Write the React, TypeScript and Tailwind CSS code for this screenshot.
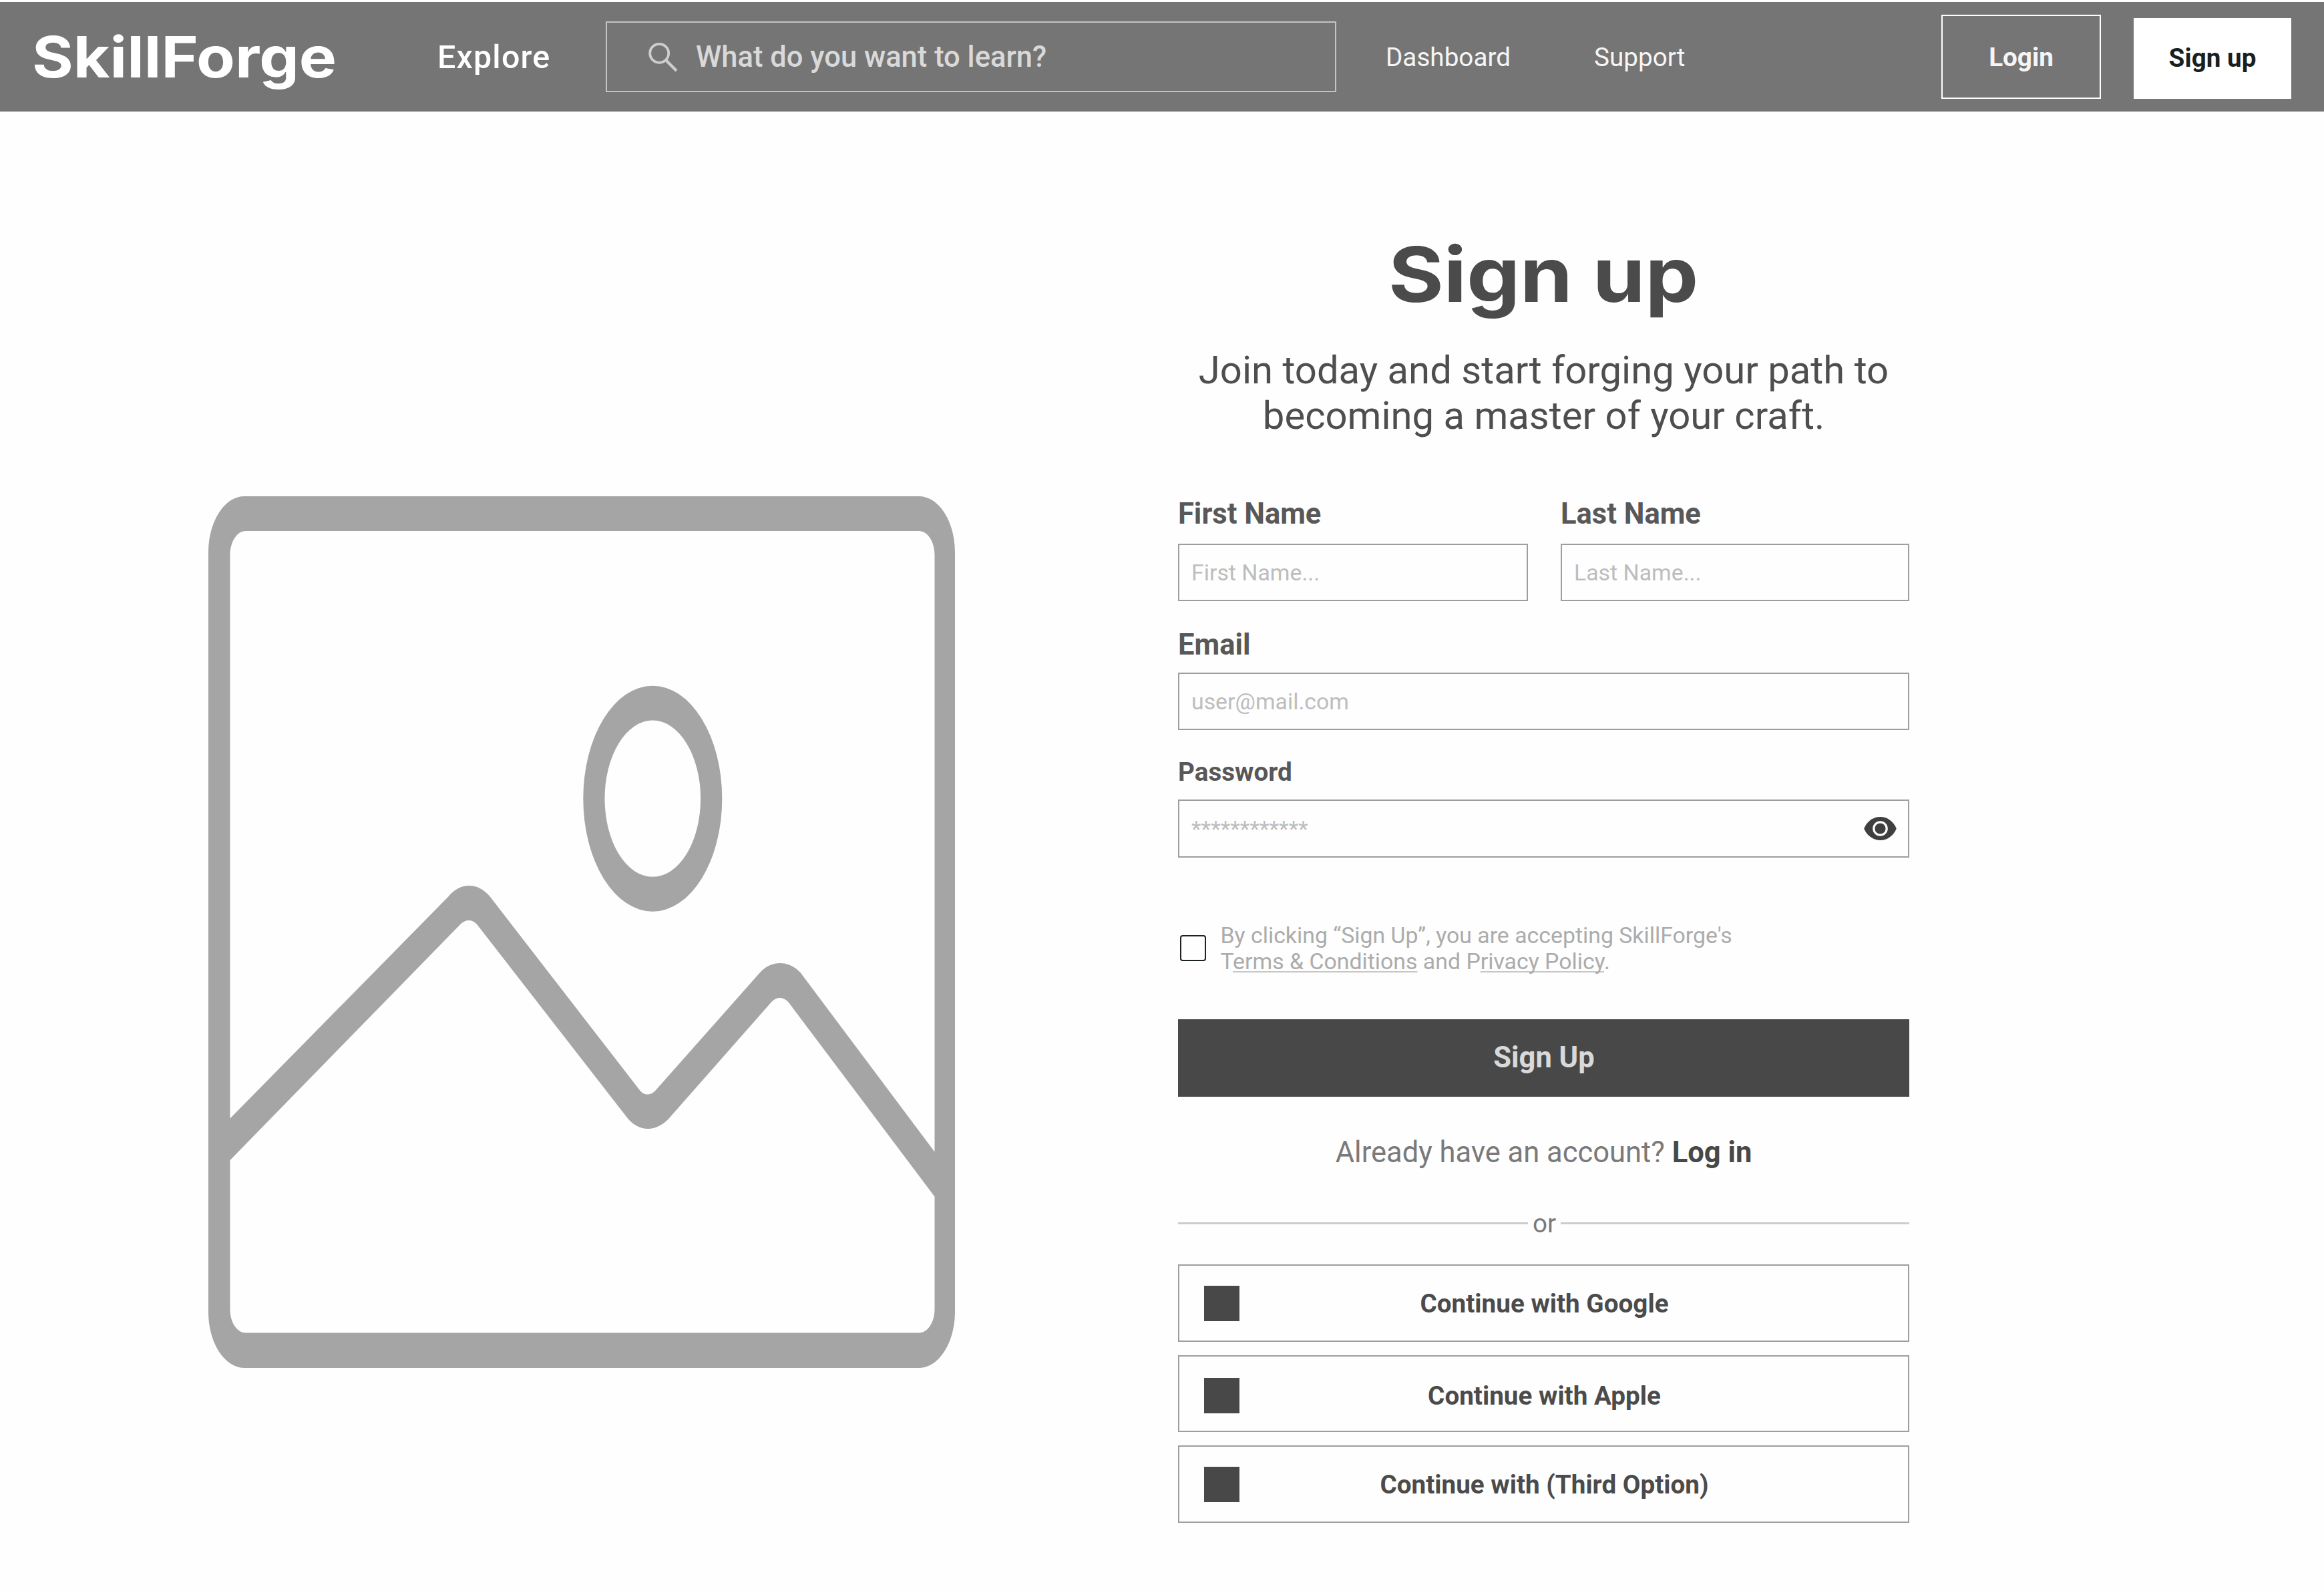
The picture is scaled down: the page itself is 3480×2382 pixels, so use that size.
import React from "react";

function SearchIcon() {
  return (
    <svg className="mt-[1px] h-[44px] w-[44px] shrink-0" viewBox="0 0 44 44" fill="none" stroke="#cdcdcd">
      <circle cx="16.2" cy="15.8" r="14" strokeWidth="3.8" />
      <path d="M26.5 26.5L42 42" strokeWidth="4.4" />
    </svg>
  );
}

function EyeIcon() {
  return (
    <svg className="mb-[2px] h-[35px] w-[49px] shrink-0" viewBox="0 0 49 35">
      <path d="M24.5 0C13.6 0 4.2 7.2 .3 17.5C4.2 27.8 13.6 35 24.5 35S44.8 27.8 48.7 17.5C44.8 7.2 35.4 0 24.5 0Z" fill="#3f3f3f" />
      <circle cx="24.5" cy="17.5" r="9.7" fill="none" stroke="#fff" strokeWidth="3.2" />
    </svg>
  );
}

function PlaceholderImage() {
  return (
    <svg className="mt-[576px] ml-[312px] h-[1305px] w-[1118px] shrink-0" viewBox="312 743 1118 1305" fill="#a5a5a5">
      <path
        fillRule="evenodd"
        d="M366 743H1376C1406 743 1430 781 1430 827V1964C1430 2010 1406 2048 1376 2048H366C336 2048 312 2010 312 1964V827C312 781 336 743 366 743Z
           M368 795C355 795 344.5 811 344.5 831V1674.5L671 1342.8C689 1320.5 716 1320.5 734 1342.8L957 1631C964 1641 975 1641 983 1631L1139 1455C1156 1437.5 1181 1437.5 1198.5 1456L1399.5 1724.5V831C1399.5 811 1389 795 1376 795Z
           M344.5 1737V1960C344.5 1980 355 1995.5 368 1995.5H1376C1389 1995.5 1399.5 1980 1399.5 1960V1791.5L1180.7 1500.6C1173.5 1492 1163 1492 1155.6 1499.7L1001.7 1674.5C983 1695 957 1695 940 1674.5L714 1383.8C707 1376 697 1376 689.5 1383.8Z"
      />
      <path
        fillRule="evenodd"
        d="M873.3 1195.7A104 169 0 1 1 1081.3 1195.7A104 169 0 1 1 873.3 1195.7Z
           M905.5 1195.7A71.8 117 0 1 0 1049.1 1195.7A71.8 117 0 1 0 905.5 1195.7Z"
      />
    </svg>
  );
}

function Header() {
  return (
    <header className="flex h-[164px] items-center bg-[#757575] pr-[49px] pl-[48px] text-[38.67px] text-[#f5f5f5]">
      <div className="w-[607px] pt-[2px]">
        <span className="inline-block origin-left scale-x-[1.111] font-['Inter'] text-[85px] leading-[100px] font-bold text-white">
          SkillForge
        </span>
      </div>
      <a className="w-[252px] pt-[1px] text-[48.33px] leading-[58px] font-medium tracking-[1.2px] text-white">Explore</a>
      <div className="flex h-[106px] w-[1094px] items-center border-2 border-[#c4c4c4] pl-[62px]">
        <SearchIcon />
        <span className="ml-[27px] pt-[2px] text-[43.5px] leading-[52px] font-medium text-[#d9d9d9]">What do you want to learn?</span>
      </div>
      <a className="ml-[74px] w-[312px] pt-[2px] leading-[46px]">Dashboard</a>
      <a className="pt-[2px] leading-[46px]">Support</a>
      <button className="ml-auto flex h-[126px] w-[239px] items-center justify-center border-[2.4px] border-white pt-[2px] leading-[46px] font-bold">
        Login
      </button>
      <button className="mt-[5px] ml-[49px] flex h-[121px] w-[236px] items-center justify-center bg-white pb-[2px] leading-[46px] font-bold text-[#1a1f1f]">
        Sign up
      </button>
    </header>
  );
}

const field = "flex items-center border-2 border-[#9e9e9e] pl-[18px] pr-[17px] pt-[2px] text-[33.83px] leading-[40px] text-[#bdbdbd]";
const label = "text-[43.5px] leading-[52px] font-bold text-[#585858]";

function Social({ text, shift, iconShift }: { text: string; shift: string; iconShift: string }) {
  return (
    <button className="grid h-[115.6px] grid-cols-[53px_1fr_53px] items-center border-2 border-[#9e9e9e] px-[37px] text-[38.67px] leading-[46px] font-bold text-[#4b4b4b]">
      <span className={`h-[53px] w-[53px] bg-[#484848] ${iconShift}`} />
      <span className={`pl-[2px] text-center ${shift}`}>{text}</span>
    </button>
  );
}

export default function App() {
  return (
    <div className="h-[2382px] w-[3480px] overflow-hidden bg-[#fefefe] pt-[3px] font-['Roboto',sans-serif]">
      <Header />
      <main className="flex items-start">
        <PlaceholderImage />
        <section className="ml-[334px] flex w-[1095px] flex-col pt-[183.6px]">
          <h1 className="text-center font-['Inter'] text-[114px] leading-[120px]">
            <span className="inline-block scale-x-[1.11] font-bold text-[#4b4b4b]">Sign up</span>
          </h1>
          <p className="mt-[50.6px] text-center text-[58px] leading-[67.7px] text-[#4e4e4e]">
            Join today and start forging your path to
            <br />
            becoming a master of your craft.
          </p>

          <div className="mt-[87.6px] grid grid-cols-[524px_522px] gap-x-[49px]">
            <div className="flex flex-col">
              <label className={label}>First Name</label>
              <div className={`mt-[17.4px] h-[86px] ${field}`}>First Name...</div>
            </div>
            <div className="flex flex-col">
              <label className={label}>Last Name</label>
              <div className={`mt-[17.4px] h-[86px] ${field}`}>Last Name...</div>
            </div>
          </div>

          <label className={`mt-[40.6px] ${label}`}>Email</label>
          <div className={`mt-[14.4px] h-[86.6px] ${field}`}>user@mail.com</div>

          <label className="mt-[39.5px] text-[38.67px] leading-[46px] font-bold text-[#585858]">Password</label>
          <div className={`mt-[18.5px] h-[87px] justify-between ${field}`}>
            <span>************</span>
            <EyeIcon />
          </div>

          <div className="mt-[98px] flex items-start pl-[3px]">
            <span className="mt-[18px] h-[38.5px] w-[38.5px] shrink-0 rounded-[4px] border-[2.4px] border-[#1c2222]" />
            <p className="ml-[22px] text-[33.83px] leading-[38.7px] text-[#acacac]">
              By clicking “Sign Up”, you are accepting SkillForge's
              <br />T
              <span className="underline decoration-[#c8c8c8] decoration-2 underline-offset-[3px] [text-decoration-skip-ink:none]">erms &amp; Conditions</span> and P
              <span className="underline decoration-[#c8c8c8] decoration-2 underline-offset-[3px] [text-decoration-skip-ink:none]">rivacy Policy</span>.
            </p>
          </div>

          <button className="mt-[66.2px] h-[116px] bg-[#484848] pt-[1px] pl-[1px] text-[43.5px] leading-[52px] font-bold text-[#d9d9d9]">
            Sign Up
          </button>

          <p className="mt-[58.5px] text-center text-[43.5px] leading-[52px] text-[#7a7a7a]">
            Already have an account? <b className="font-bold text-[#484848]">Log in</b>
          </p>

          <div className="mt-[56.5px] flex items-center text-[38.67px] leading-[46px] text-[#7a7a7a]">
            <span className="h-[3px] w-[524px] bg-[#cccccc]" />
            <span className="flex-1 text-center">or</span>
            <span className="h-[3px] w-[522px] bg-[#cccccc]" />
          </div>

          <div className="mt-[38.5px] flex flex-col gap-[19.9px]">
            <Social text="Continue with Google" shift="pt-[2px]" iconShift="" />
            <Social text="Continue with Apple" shift="pt-[7px]" iconShift="mt-[5px]" />
            <Social text="Continue with (Third Option)" shift="pt-[2px]" iconShift="" />
          </div>
        </section>
      </main>
    </div>
  );
}
